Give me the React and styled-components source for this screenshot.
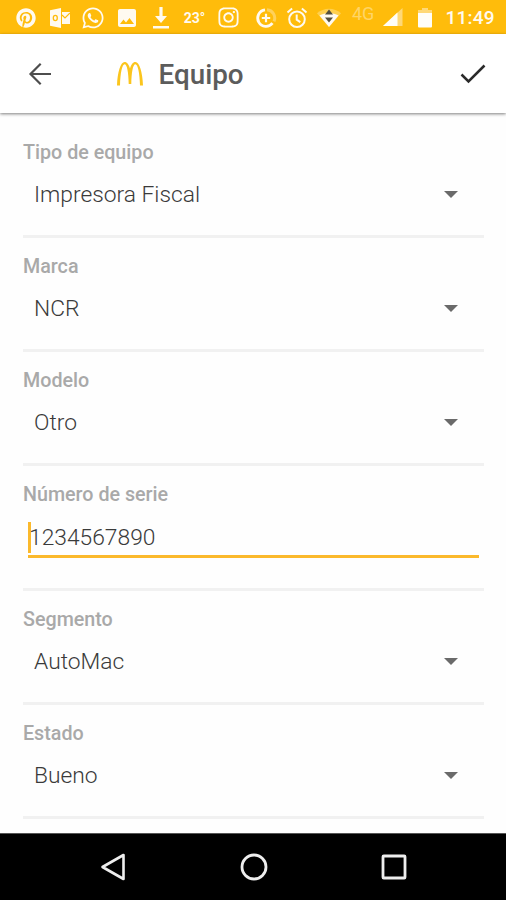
import React from 'react';
import styled, { createGlobalStyle } from 'styled-components';
import { FaPinterest, FaWhatsapp, FaInstagram } from 'react-icons/fa';
import { MdImage } from 'react-icons/md';

const GlobalStyle = createGlobalStyle`
  * {
    box-sizing: border-box;
  }

  body {
    margin: 0;
    background-color: #fefefe;
    font-family: Roboto, sans-serif;
  }
`;

const Screen = styled.div`
  display: flex;
  flex-direction: column;
  width: 506px;
  height: 900px;
  overflow: hidden;
  background-color: #fefefe;
`;

const StatusBar = styled.div`
  display: flex;
  align-items: center;
  flex: none;
  height: 34px;
  padding: 1px 0 0 9px;
  background-color: #ffbc0b;
  color: #fffaf0;
`;

const Slot = styled.div`
  display: flex;
  align-items: center;
  justify-content: center;
  flex: none;
  width: ${({ $width }) => $width || 34}px;

  & > svg {
    display: block;
    flex: none;
  }
`;

const Temperature = styled.span`
  font-size: 14px;
  font-weight: 700;
`;

const Network = styled.span`
  margin-top: -9px;
  font-size: 18px;
  letter-spacing: -0.3px;
  color: #ffd566;
`;

const Clock = styled.span`
  margin-left: 5px;
  font-size: 19px;
  font-weight: 500;
  letter-spacing: 0.2px;
`;

const Header = styled.header`
  display: flex;
  align-items: center;
  flex: none;
  height: 79px;
  padding: 0 20px 0 28px;
  background-color: #fff;
  box-shadow: 0 1px 3px rgba(0, 0, 0, 0.5);
  z-index: 1;

  & > svg {
    display: block;
    flex: none;
  }
`;

const Title = styled.h1`
  flex: 1;
  margin: 2px 0 0 15.5px;
  font-size: 27.8px;
  font-weight: 500;
  line-height: 32px;
  color: #5c5c5c;
`;

const IconButton = styled.button`
  display: flex;
  margin: 0 ${({ $gap }) => $gap || 0}px 0 0;
  padding: 0;
  border: none;
  background: none;
`;

const Form = styled.main`
  flex: 1;
  min-height: 0;
  padding: 11px 22px 0 23px;
  overflow: hidden;
`;

const Field = styled.div`
  height: ${({ $height }) => $height || 114}px;
  padding-top: 18px;
  border-bottom: 3px solid #f1f1f1;
`;

const Label = styled.label`
  display: block;
  font-size: 19.7px;
  font-weight: 500;
  line-height: 22px;
  color: #a9a9a9;
`;

const Select = styled.div`
  display: flex;
  align-items: center;
  justify-content: space-between;
  height: 30px;
  margin-top: 15px;
  padding: 0 26.5px 0 11px;
`;

const Value = styled.span`
  font-size: 22.8px;
  font-weight: 300;
  color: #3a3a3a;
`;

const Arrow = styled.span`
  border: 7px solid transparent;
  border-top-color: #6a6a6a;
  border-bottom: none;
`;

const Input = styled.div`
  display: flex;
  align-items: center;
  height: 38px;
  margin: 14px 5px 0;
  border-bottom: 3px solid #fbb92c;
`;

const Caret = styled.span`
  width: 3px;
  height: 31px;
  margin-right: -2px;
  background-color: #fbb92c;
`;

const NavBar = styled.nav`
  display: flex;
  align-items: center;
  justify-content: space-between;
  flex: none;
  height: 67px;
  padding: 0 99px 0 100px;
  border-top: 1px solid #555;
  background-color: #000;

  & > svg {
    display: block;
  }
`;

const OutlookIcon = () => (
  <svg width="20" height="20" viewBox="0 0 20 20" fill="currentColor">
    <path d="M0 2.2 11 0v20L0 17.8z" />
    <path d="M12 4h8v12h-8z" />
    <path d="m12 7 3 3 5-5" fill="none" stroke="#ffbc0b" strokeWidth="1.2" />
    <ellipse cx="5.3" cy="10" rx="2" ry="2.6" fill="none" stroke="#ffbc0b" strokeWidth="1.3" />
  </svg>
);

const DownloadIcon = () => (
  <svg width="18" height="22" viewBox="0 0 18 22" fill="currentColor">
    <path d="M7.4 0h3.2v9H15l-6 7-6-7h4.4zM1 19h16v2.4H1z" />
  </svg>
);

const DataSaverIcon = () => (
  <svg width="22" height="22" viewBox="0 0 22 22" fill="none" stroke="currentColor">
    <path d="M12 2.8a8.2 8.2 0 0 1 7 11.5" strokeWidth="3" opacity=".35" />
    <path d="M10 2.8a8.3 8.3 0 1 0 7.5 13.4" strokeWidth="2.8" />
    <path d="M11 6.8v8.4M6.8 11h8.4" strokeWidth="2.2" />
  </svg>
);

const AlarmIcon = () => (
  <svg width="22" height="22" viewBox="0 0 22 22" fill="none" stroke="currentColor" strokeWidth="2">
    <circle cx="11" cy="12.2" r="7.8" />
    <path d="M10.7 7.5v5.2l3.6 2.4M1.5 5.4l4.6-3.9M20.5 5.4l-4.6-3.9" />
  </svg>
);

const WifiIcon = () => (
  <svg width="24" height="20" viewBox="0 0 24 20">
    <path d="M0 5.2C7-.8 17-.8 24 5.2L12 19z" fill="#ffd050" />
    <path d="M2.5 7.5C8 4 16 4 21.5 7.5L12 19z" fill="#fffaf0" />
    <path d="m12 1.5 4 5H8zM8 9.500h8l-4 5z" fill="#55503f" />
  </svg>
);

const SignalIcon = () => (
  <svg width="20" height="19" viewBox="0 0 20 19">
    <path d="M19.5 0v18H0z" fill="#ffd877" />
    <path d="M14.5 4.6V18H0z" fill="#fffdf8" />
  </svg>
);

const BatteryIcon = () => (
  <svg width="14" height="20" viewBox="0 0 14 20">
    <path d="M4 0h6v2h4v4H0V2h4z" fill="#ffd877" />
    <path d="M0 5h14v13.5a1 1 0 0 1-1 1H1a1 1 0 0 1-1-1z" fill="#fffdf8" />
  </svg>
);

const BackIcon = () => (
  <svg width="24" height="24" viewBox="0 0 24 24" fill="none" stroke="#4d4d4d" strokeWidth="2.2">
    <path d="M23 12H2.5M12.7 1.8 2.5 12l10.2 10.2" />
  </svg>
);

const ArchesIcon = () => (
  <svg width="26" height="24" viewBox="0 0 26 24" fill="#fbc51d">
    <path d="M7.6 0C3.5 0 .5 10 0 23.5h3C3.3 11 5.2 2.2 7.6 2.2S11.5 10 11.7 22h2.6C14.5 10 16 2.2 18.4 2.2S22.7 11 23 23.5h3C25.5 10 22.5 0 18.4 0 15.9 0 14.2 2.6 13 6.5 11.8 2.6 10.1 0 7.6 0z" />
  </svg>
);

const CheckIcon = () => (
  <svg width="26" height="20" viewBox="0 0 26 20" fill="none" stroke="#2b2b2b" strokeWidth="2.5">
    <path d="m1.5 10.5 7 7L24.5 1.5" />
  </svg>
);

const fields = [
  { label: 'Tipo de equipo', value: 'Impresora Fiscal' },
  { label: 'Marca', value: 'NCR' },
  { label: 'Modelo', value: 'Otro' },
  { label: 'Número de serie', value: '1234567890', input: true },
  { label: 'Segmento', value: 'AutoMac' },
  { label: 'Estado', value: 'Bueno' },
];

const FormField = ({ label, value, input }) => (
  <Field $height={input ? 125 : undefined}>
    <Label>{label}</Label>
    {input ? (
      <Input>
        <Caret />
        <Value>{value}</Value>
      </Input>
    ) : (
      <Select>
        <Value>{value}</Value>
        <Arrow />
      </Select>
    )}
  </Field>
);

const App = () => {
  return (
    <Screen>
      <GlobalStyle />
      <StatusBar>
        <Slot>
          <FaPinterest size={20} />
        </Slot>
        <Slot $width={33.5}>
          <OutlookIcon />
        </Slot>
        <Slot $width={33}>
          <FaWhatsapp size={24} />
        </Slot>
        <Slot>
          <MdImage size={24} />
        </Slot>
        <Slot>
          <DownloadIcon />
        </Slot>
        <Slot>
          <Temperature>23°</Temperature>
        </Slot>
        <Slot>
          <FaInstagram size={23} />
        </Slot>
        <Slot $width={40}>
          <DataSaverIcon />
        </Slot>
        <Slot $width={23}>
          <AlarmIcon />
        </Slot>
        <Slot $width={41}>
          <WifiIcon />
        </Slot>
        <Slot $width={27}>
          <Network>4G</Network>
        </Slot>
        <Slot $width={32}>
          <SignalIcon />
        </Slot>
        <Slot $width={32}>
          <BatteryIcon />
        </Slot>
        <Clock>11:49</Clock>
      </StatusBar>
      <Header>
        <IconButton $gap={65} aria-label="Volver">
          <BackIcon />
        </IconButton>
        <ArchesIcon />
        <Title>Equipo</Title>
        <IconButton aria-label="Guardar">
          <CheckIcon />
        </IconButton>
      </Header>
      <Form>
        {fields.map((field) => (
          <FormField key={field.label} {...field} />
        ))}
      </Form>
      <NavBar>
        <svg width="26" height="28" viewBox="0 0 26 28" fill="none" stroke="#eee" strokeWidth="2.6" strokeLinejoin="round">
          <path d="M23.5 2v24L2.5 14z" />
        </svg>
        <svg width="28" height="28" viewBox="0 0 28 28" fill="none" stroke="#eee" strokeWidth="2.8">
          <circle cx="14" cy="14" r="12" />
        </svg>
        <svg width="26" height="26" viewBox="0 0 26 26" fill="none" stroke="#eee" strokeWidth="2.8">
          <rect x="2" y="2" width="22" height="22" rx=".8" />
        </svg>
      </NavBar>
    </Screen>
  );
};

export default App;
